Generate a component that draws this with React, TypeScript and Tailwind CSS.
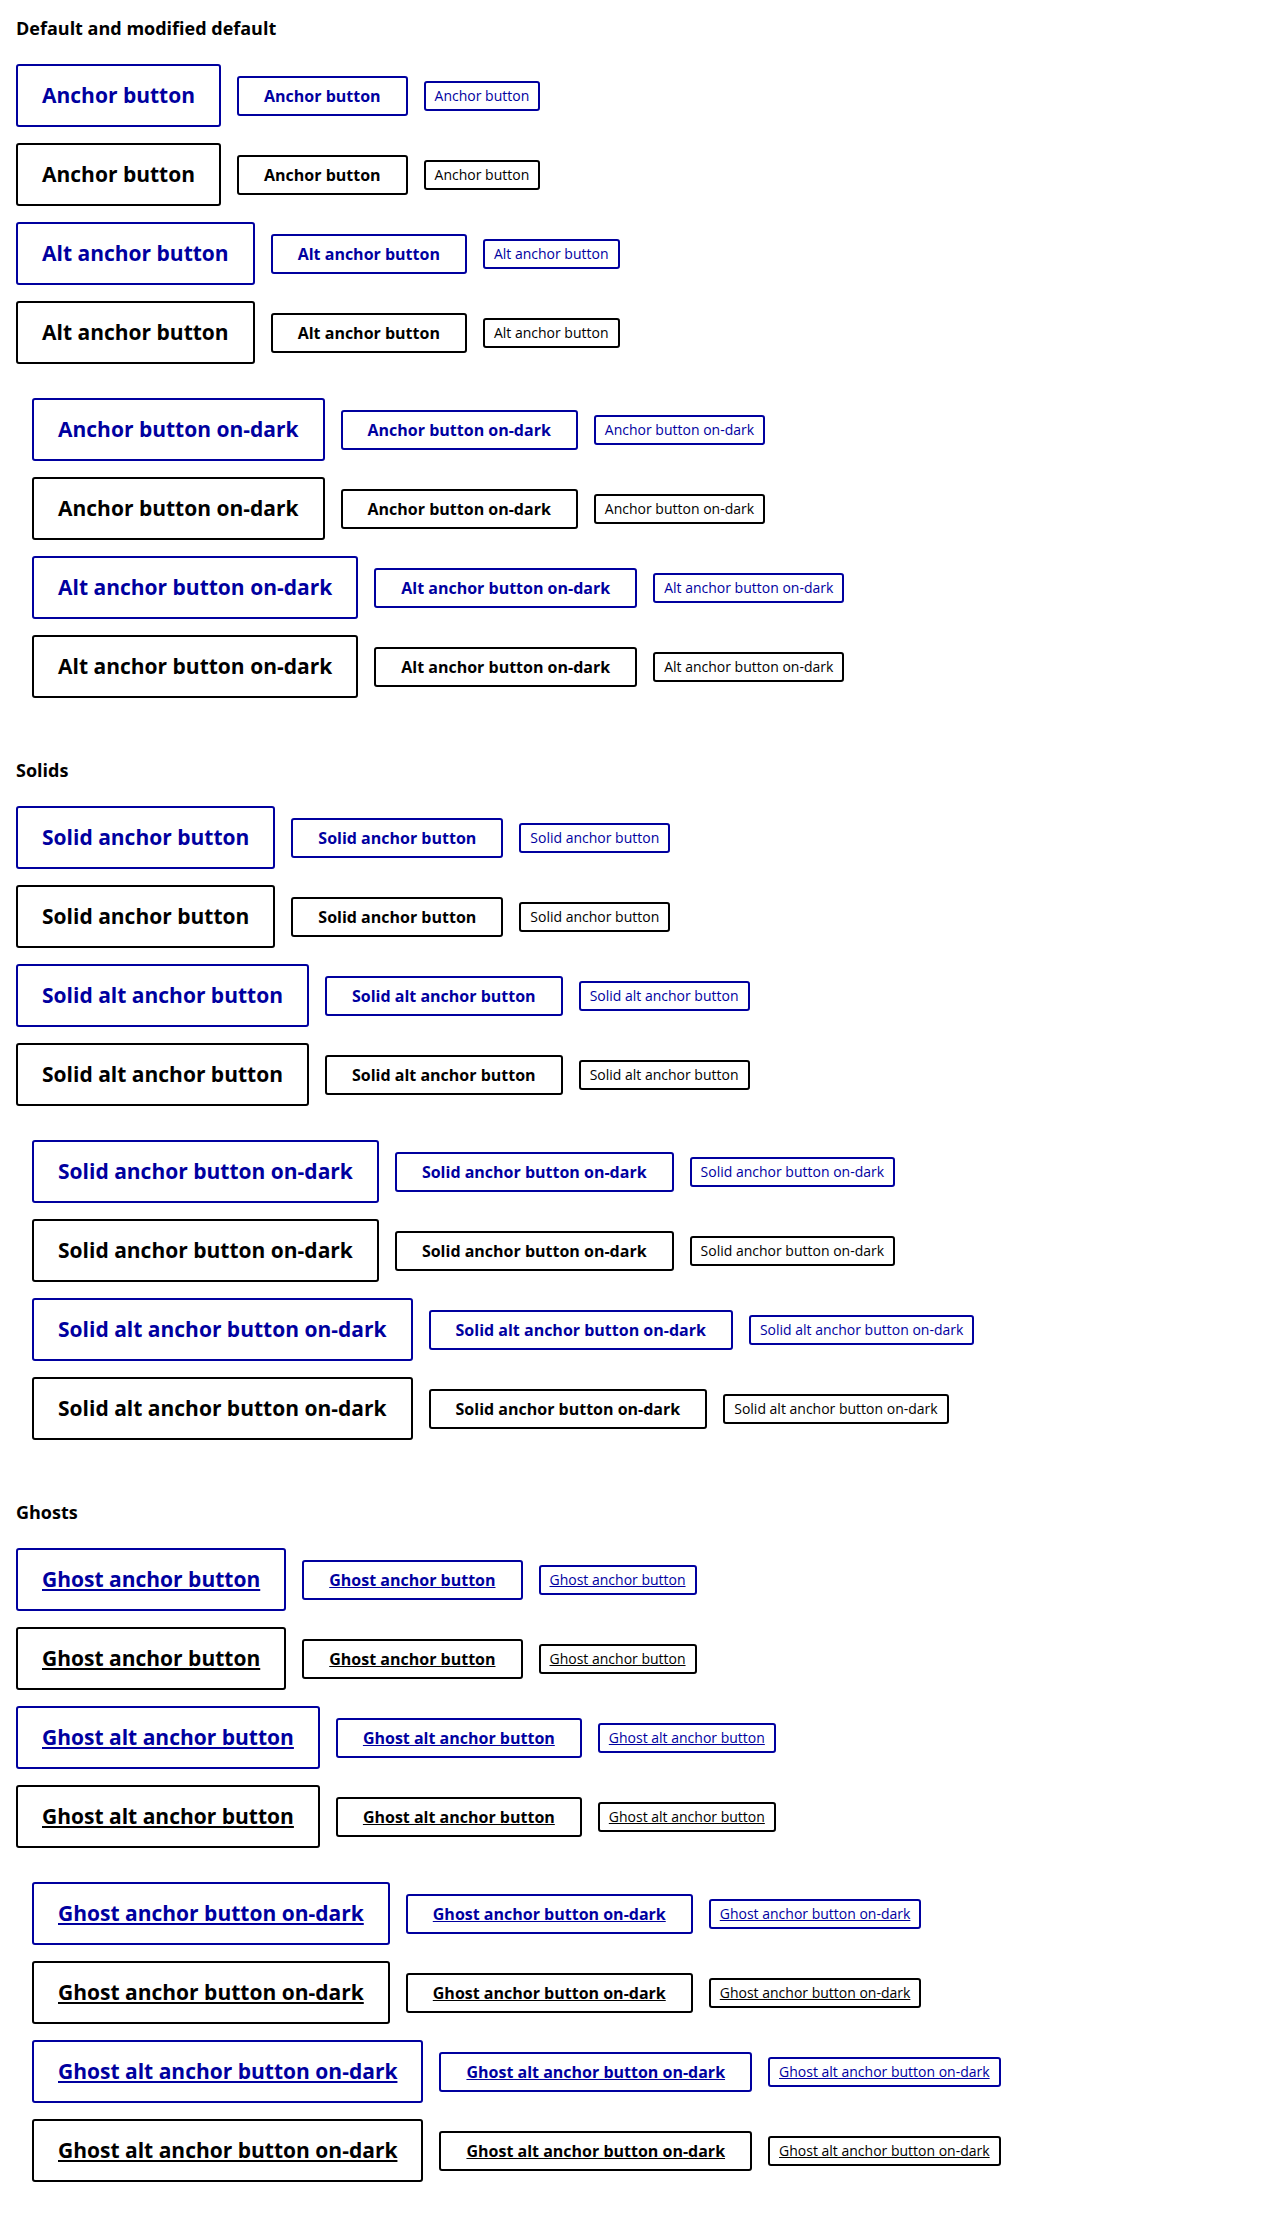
import React from "react";

type Row = { labels: [string, string, string]; disabled: boolean };

const row = (label: string, disabled: boolean): Row => ({ labels: [label, label, label], disabled });
const pair = (label: string): Row[] => [row(label, false), row(label, true)];

const sections = [
  {
    title: "Default and modified default",
    underline: false,
    light: [...pair("Anchor button"), ...pair("Alt anchor button")],
    dark: [...pair("Anchor button on-dark"), ...pair("Alt anchor button on-dark")],
  },
  {
    title: "Solids",
    underline: false,
    light: [...pair("Solid anchor button"), ...pair("Solid alt anchor button")],
    dark: [
      ...pair("Solid anchor button on-dark"),
      row("Solid alt anchor button on-dark", false),
      {
        labels: [
          "Solid alt anchor button on-dark",
          "Solid anchor button on-dark",
          "Solid alt anchor button on-dark",
        ],
        disabled: true,
      } as Row,
    ],
  },
  {
    title: "Ghosts",
    underline: true,
    light: [...pair("Ghost anchor button"), ...pair("Ghost alt anchor button")],
    dark: [...pair("Ghost anchor button on-dark"), ...pair("Ghost alt anchor button on-dark")],
  },
];

const sizes = [
  "px-6 py-4 text-[21px] leading-[27px] font-bold",
  "px-[25px] py-2 text-base leading-5 font-bold",
  "px-[9px] py-1 text-sm leading-[18px] font-normal",
];

function ButtonRow({ row, underline }: { row: Row; underline: boolean }) {
  return (
    <div className="flex items-center gap-4">
      {row.labels.map((label, i) => (
        <a
          key={i}
          href="#"
          className={`rounded-[3px] border-2 whitespace-nowrap ${sizes[i]} ${
            row.disabled ? "border-black text-black" : "border-[#00009f] text-[#00009f]"
          } ${underline ? "underline" : "no-underline"}`}
        >
          {label}
        </a>
      ))}
    </div>
  );
}

export default function App() {
  return (
    <main className="flex flex-col gap-11 bg-white p-4 font-['Open_Sans',sans-serif] text-black">
      {sections.map((s) => (
        <section key={s.title}>
          <h2 className="mb-6 text-lg leading-6 font-bold">{s.title}</h2>
          <div className="flex flex-col gap-4">
            {s.light.map((r, i) => (
              <ButtonRow key={i} row={r} underline={s.underline} />
            ))}
          </div>
          <div className="mt-[18px] flex flex-col gap-4 p-4">
            {s.dark.map((r, i) => (
              <ButtonRow key={i} row={r} underline={s.underline} />
            ))}
          </div>
        </section>
      ))}
    </main>
  );
}
